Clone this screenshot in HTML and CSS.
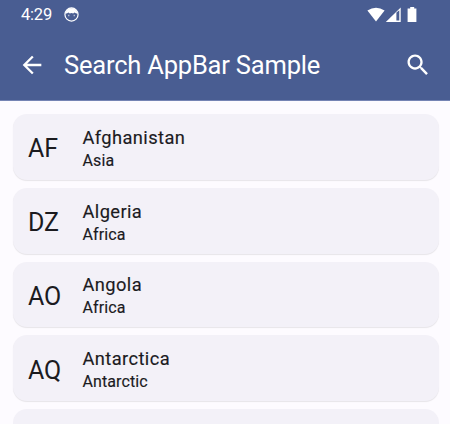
FILE: index.html
```html
<!DOCTYPE html>
<html lang="en">
<head>
<meta charset="utf-8">
<title>Search AppBar Sample</title>
<link rel="stylesheet" href="styles.css">
</head>
<body>
<header class="top">
  <div class="status">
    <span class="time">4:29</span>
    <svg class="notif" viewBox="0 0 16 16"><circle cx="8" cy="8" r="7" fill="none" stroke="#fff" stroke-width="1.300"/><path d="M1.600 7.200C2 3.400 5 1.400 8 1.400s6 2 6.400 5.800L12.600 6.600 11.200 5.800 9.800 6.800 8 6.300 6.200 6.800 4.800 5.800 3.400 6.600z" fill="#fff"/><path d="M4.300 8.300h1.500v1.500H4.300zM10.200 8.300h1.500v1.500h-1.500z" fill="#fff" fill-opacity=".6"/></svg>
    <svg class="signals" viewBox="0 0 52 16"><path d="M.4 3.600Q9 -2.200 17.600 3.600L9 14.600z" fill="#fff"/><path fill-rule="evenodd" d="M33.700.4V15H18.800zM29.400 5.600v8h2.900V3.200z" fill="#fff"/><path d="M43.200 0h4v1.500h2.200V15h-8.800V1.500h2.600z" fill="#fff"/></svg>
  </div>
  <div class="appbar">
    <svg class="icon" viewBox="0 0 24 24"><path fill="#fff" d="M20 11H7.830l5.590-5.590L12 4l-8 8 8 8 1.410-1.410L7.830 13H20v-2z"/></svg>
    <h1 class="title">Search AppBar Sample</h1>
    <svg class="icon" viewBox="0 0 24 24"><path fill="#fff" d="M15.500 14h-.79l-.28-.27C15.410 12.590 16 11.110 16 9.500 16 5.910 13.090 3 9.500 3S3 5.910 3 9.500 5.910 16 9.500 16c1.610 0 3.090-.59 4.230-1.570l.27.28v.79l5 4.990L20.490 19l-4.990-5zm-6 0C7.010 14 5 11.990 5 9.500S7.010 5 9.500 5 14 7.010 14 9.500 11.990 14 9.500 14z"/></svg>
  </div>
</header>
<main class="list">
  <article class="card"><span class="code">AF</span><div><h2 class="name">Afghanistan</h2><p class="region">Asia</p></div></article>
  <article class="card"><span class="code">DZ</span><div><h2 class="name">Algeria</h2><p class="region">Africa</p></div></article>
  <article class="card"><span class="code">AO</span><div><h2 class="name">Angola</h2><p class="region">Africa</p></div></article>
  <article class="card"><span class="code">AQ</span><div><h2 class="name">Antarctica</h2><p class="region">Antarctic</p></div></article>
  <article class="card last"></article>
</main>
</body>
</html>
```
FILE: styles.css
```css
* { box-sizing: border-box; }
body {
  margin: 0;
  height: 424px;
  overflow: hidden;
  background: #fdfbff;
  color: #1b1b1f;
  font-family: Roboto, sans-serif;
}
h1, h2, p { margin: 0; }
.top { height: 101px; background: #495d92; border-bottom: 1px solid #7584b4; color: #fff; }
.status { display: flex; align-items: center; height: 29px; padding: 0 31px 0 21px; }
.time { width: 43px; font-size: 16.500px; letter-spacing: -.2px; }
.notif { width: 15px; height: 15px; }
.signals { width: 52px; height: 16px; margin-left: auto; }
.appbar { display: flex; align-items: center; height: 71px; padding: 0 18px; }
.icon { width: 28px; height: 28px; flex: none; }
.title { flex: 1; padding-left: 18px; font-size: 25.500px; font-weight: 400; letter-spacing: -.2px; white-space: nowrap; }
.list { display: flex; flex-direction: column; gap: 8px; height: 323px; padding: 13px 11px 0 13px; }
.card {
  display: flex;
  align-items: center;
  flex: none;
  height: 65.800px;
  padding: 4px 0 0 15px;
  border-radius: 14px;
  background: #f3f1f8;
  box-shadow: 0 1px 1px rgba(0, 0, 0, .09);
}
.last { flex: 1; height: auto; border-radius: 14px 14px 0 0; box-shadow: none; }
.code { width: 54.500px; font-size: 25px; letter-spacing: -.1px; }
.name,
.region { font-weight: 400; -webkit-text-stroke: .15px #1b1b1f; }
.name { font-size: 18.300px; line-height: 24px; letter-spacing: .4px; }
.region { font-size: 16px; line-height: 22px; letter-spacing: .1px; }
```
